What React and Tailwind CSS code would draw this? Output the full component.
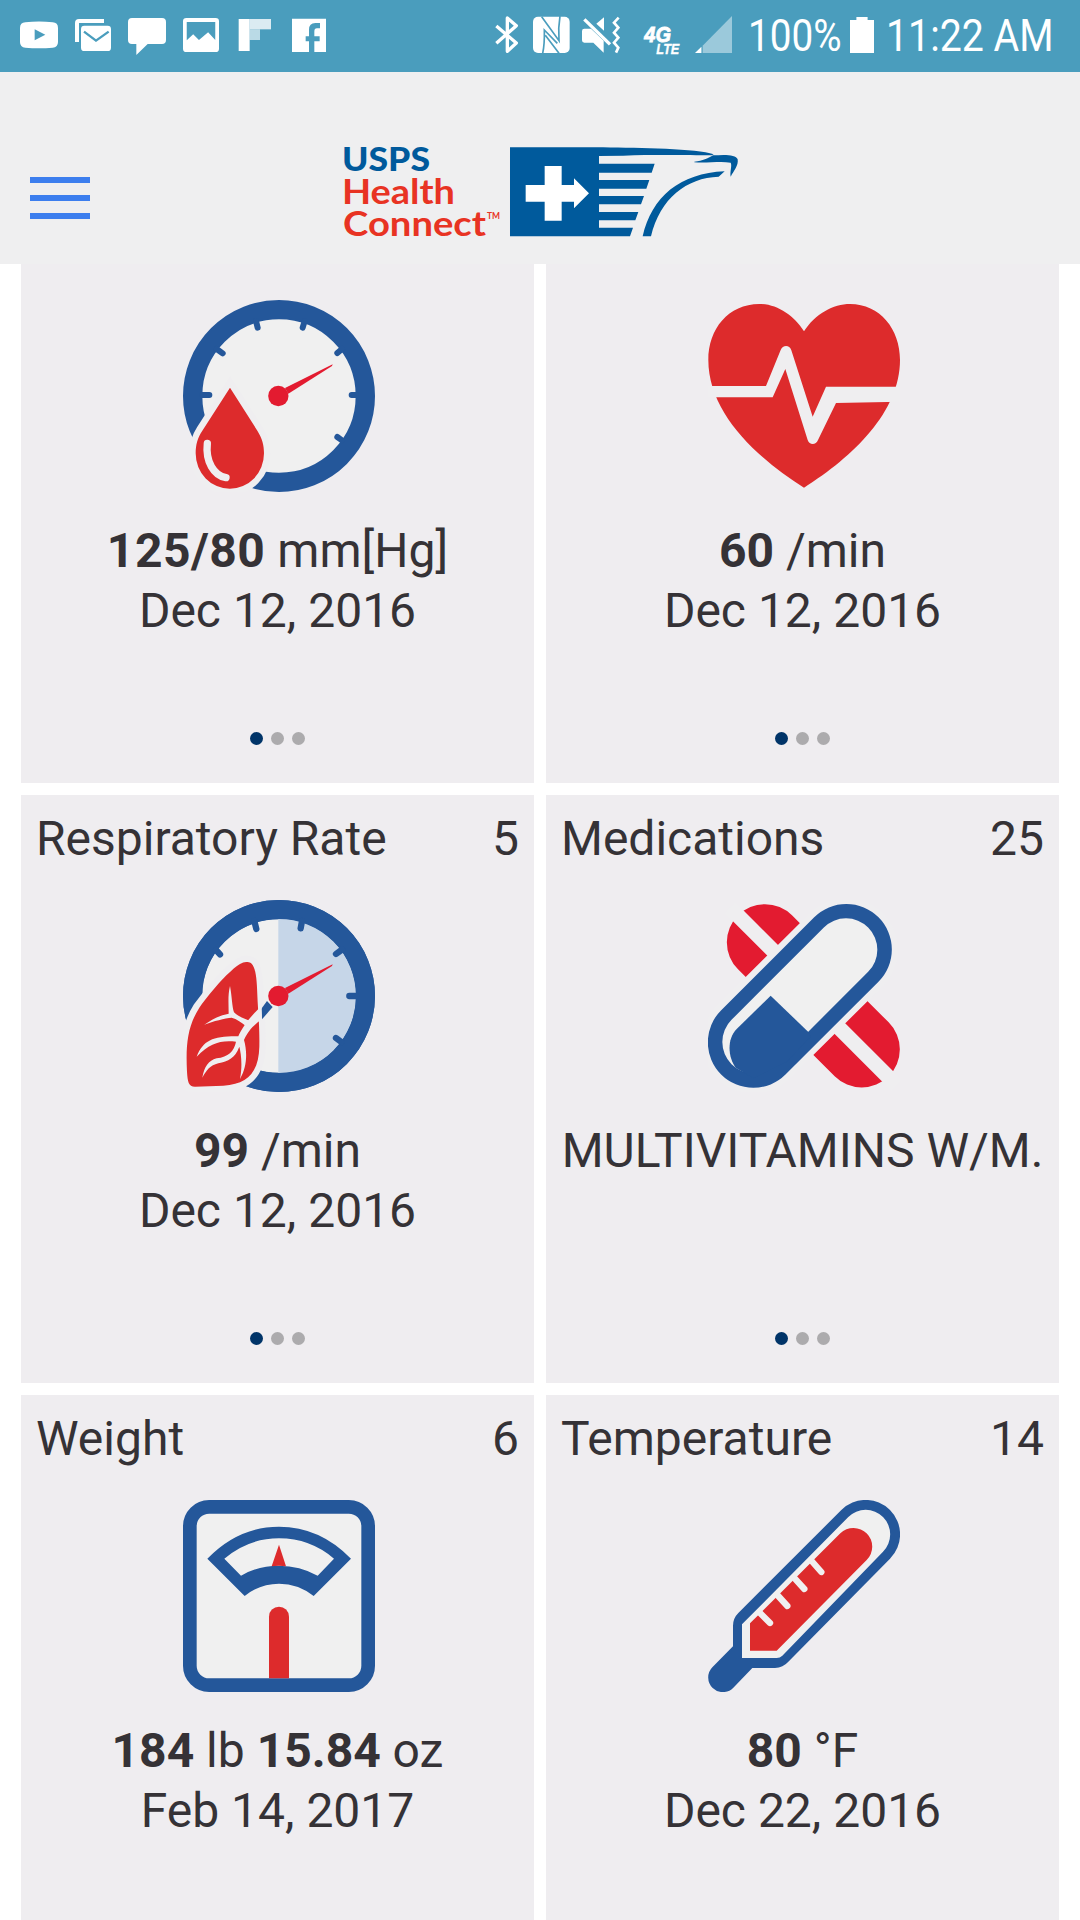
import React from "react";

const BG = "#efeef0";
const BLUE = "#24579a";
const RED = "#dd2b2c";
const CRIMSON = "#e31b30";

function StatusIcon({ box, className, children }) {
  return (
    <svg viewBox={box} preserveAspectRatio="none" className={`h-[72px] shrink-0 ${className}`} fill="#fff">
      {children}
    </svg>
  );
}

function StatusBar() {
  return (
    <div className="flex h-[72px] shrink-0 bg-[#4a9dbd] pl-5 text-white">
      <StatusIcon box="60 0 114 216" className="w-[38px]">
        <path fillRule="evenodd" d="M76 67Q117 62 158 67Q174 68 174 84V126Q174 142 158 143Q117 146 76 143Q60 142 60 126V84Q60 68 76 67ZM104 88V121L136 104Z" />
      </StatusIcon>
      <StatusIcon box="225 0 108 216" className="ml-[17px] w-[36px]">
        <path d="M225 126V69Q225 57 237 57H312V69H237V126Z" />
        <rect x="243" y="77" width="90" height="76" rx="10" />
        <path d="M252 95L288 122L326 95" fill="none" stroke="#4a9dbd" strokeWidth="7" />
      </StatusIcon>
      <StatusIcon box="384 0 114 216" className="ml-[17px] w-[38px]">
        <path d="M396 54H486Q498 54 498 66V120Q498 132 486 132H443L409 165V132H396Q384 132 384 120V66Q384 54 396 54Z" />
      </StatusIcon>
      <StatusIcon box="550 0 106 216" className="ml-[17px] w-[36px]">
        <path fillRule="evenodd" d="M560 54H646Q656 54 656 64V146Q656 156 646 156H560Q550 156 550 146V64Q550 54 560 54ZM561 66V121L580 103L597 120L624 97L645 120V66Z" />
      </StatusIcon>
      <StatusIcon box="714 0 99 216" className="ml-[19px] w-[33px]">
        <path d="M716 57H749V153H716Z" />
        <path d="M749 57H813V88H749Z" opacity=".8" />
        <path d="M749 88H780V120H749Z" opacity=".62" />
      </StatusIcon>
      <StatusIcon box="876 0 102 216" className="ml-[21px] w-[34px]">
        <path fillRule="evenodd" d="M876 56H978V156H943V124H959V109H943V95Q943 85 951 85H960V69H946Q927 69 927 89V109H917V124H927V156H876Z" />
      </StatusIcon>

      <StatusIcon box="30 -24 72 216" className="ml-[169px] w-[24px]">
        <path d="M34 54L94 105L67 130V30L94 53L34 106" fill="none" stroke="#fff" strokeWidth="10" strokeLinejoin="round" />
      </StatusIcon>
      <StatusIcon box="144 -24 111 216" className="ml-[14px] w-[37px]">
        <rect x="144" y="26" width="110" height="109" rx="15" />
        <path d="M173 136Q179 110 178 66L217 106M170 26L222 98Q219 60 225 24M181 82L222 136" fill="none" stroke="#4a9dbd" strokeWidth="5" />
      </StatusIcon>
      <StatusIcon box="291 -24 114 216" className="ml-[12px] w-[38px]">
        <path d="M298 62H318L356 98V134L325 104H298Q291 104 291 97V69Q291 62 298 62ZM334 47L357 28V68Z" />
        <path d="M298 34L375 109" stroke="#fff" strokeWidth="10" />
        <path d="M401 29L387 44L400 59L387 74L400 89L387 104L400 119L393 134" fill="none" stroke="#fff" strokeWidth="8" />
      </StatusIcon>
      <StatusIcon box="478 -24 108 216" className="ml-[24px] w-[36px] overflow-visible">
        <text x="479" y="101" fontFamily="Liberation Sans, sans-serif" fontWeight="700" fontStyle="italic" fontSize="64" textLength="80" lengthAdjust="spacingAndGlyphs" stroke="#fff" strokeWidth="2.500">4G</text>
        <text x="515" y="137" fontFamily="Liberation Sans, sans-serif" fontWeight="700" fontStyle="italic" fontSize="43" textLength="69" lengthAdjust="spacingAndGlyphs" stroke="#fff">LTE</text>
      </StatusIcon>
      <StatusIcon box="598 0 92 216" className="ml-[15px] w-[37px]">
        <path d="M690 48V159H617V137Z" opacity=".45" />
        <path d="M614 140V159H598Z" />
      </StatusIcon>
      <div className="ml-[16px] w-[94px] pt-[8px] font-['Roboto',sans-serif] text-[45px] leading-[56px]">
        <span className="inline-block origin-left scale-x-[0.86]">100%</span>
      </div>
      <StatusIcon box="988 0 60 216" className="ml-[8px] w-[24px]">
        <path d="M988 60H1004V51H1032V60H1048V159H988Z" />
      </StatusIcon>
      <div className="ml-[12px] w-[180px] pt-[8px] font-['Roboto',sans-serif] text-[45px] leading-[56px]">
        <span className="inline-block origin-left scale-x-[0.873] whitespace-nowrap">11:22 AM</span>
      </div>
    </div>
  );
}

function Logo() {
  return (
    <svg viewBox="0 0 400 100" className="h-[100px] w-[400px] overflow-visible" aria-label="USPS Health Connect">
      <g fontFamily="Lato, sans-serif">
        <text x="0" y="31" fill="#005a9c" fontWeight="900" fontSize="32" textLength="88" lengthAdjust="spacingAndGlyphs">USPS</text>
        <text x="0" y="64" fill="#e83323" fontWeight="700" fontSize="33.500" textLength="113" lengthAdjust="spacingAndGlyphs">Health</text>
        <text x="1" y="96" fill="#e83323" fontWeight="700" fontSize="33.500" textLength="143" lengthAdjust="spacingAndGlyphs">Connect</text>
        <text x="145" y="79" fill="#e83323" fontWeight="700" fontSize="9.500" textLength="13" lengthAdjust="spacingAndGlyphs">TM</text>
      </g>
      <g transform="translate(148 -10) scale(.33333)" fill="#005a9c">
        <path d="M60 52H340C450 54 620 56 671 73L665 76C600 76 500 74 400 77L327 78V319H60Z" />
        <path d="M327 101H494L485 128H327ZM327 150H478L469 176H327ZM327 198H462L453 223H327ZM327 246H445L436 271H327ZM327 293H429L420 319H327Z" />
        <path d="M613 95C640 92 652 86 669 76C700 74 738 72 743 88C746 106 732 122 722 140C719 125 727 108 722 98C690 92 655 100 613 97Z" />
        <path d="M458 319C485 200 570 130 704 124L686 140C590 143 510 205 483 319Z" />
        <path fill="#fff" d="M164 108H215V165H252V145L297 190L252 235V215H215V272H164V215H107V165H164Z" />
      </g>
    </svg>
  );
}

function Header() {
  return (
    <header className="relative z-10 flex h-[192px] shrink-0 items-start bg-[#efeff0] pl-[30px] pt-[68px]">
      <button className="mt-[37px] flex w-[60px] flex-col gap-3" aria-label="Menu">
        <span className="h-1.5 w-full bg-[#3c7eee]" />
        <span className="h-1.5 w-full bg-[#3c7eee]" />
        <span className="h-1.5 w-full bg-[#3c7eee]" />
      </button>
      <div className="ml-[252px]">
        <Logo />
      </div>
    </header>
  );
}

function Needle() {
  return (
    <g fill={CRIMSON}>
      <path d="M488 238L486 243L355 326L345 309Z" />
      <circle cx="325" cy="333" r="30.500" />
    </g>
  );
}

function BloodPressureIcon() {
  const drop = "M180 308L262 437C277 461 282 480 282 505A102 106 0 0 1 77 505C77 480 82 460 97 437Z";
  return (
    <>
      <circle cx="327" cy="333" r="259" fill="#f0f0f0" stroke={BLUE} strokeWidth="58" />
      <path d="M97 330H118M558 330H545M258 108L263 128M404 108L398 128M140 192L158 205M516 192L502 204M516 466L502 456" stroke={BLUE} strokeWidth="18" strokeLinecap="round" fill="none" />
      <path d={drop} fill={BG} stroke={BG} strokeWidth="38" />
      <path d={drop} fill={RED} />
      <path d="M112 475C106 530 132 572 168 578" stroke={BG} strokeWidth="22" strokeLinecap="round" fill="none" />
      <Needle />
    </>
  );
}

function HeartIcon() {
  return (
    <>
      <path fill={RED} d="M342 139C375 87 430 57 480 57C570 57 630 132 630 225C630 380 490 515 342 608C194 515 55 380 55 225C55 132 115 57 208 57C262 57 312 92 342 139Z" />
      <path fill={BG} d="M40 303H228L272 195C278 180 298 178 304 196L368 395L408 305H650V350L438 354L384 465C378 481 358 481 353 465L286 252L248 337H40Z" />
    </>
  );
}

function RespiratoryIcon() {
  const lung = "M232 231C252 232 260 255 262 330C264 380 269 420 268 485C266 560 235 598 160 602L75 605C55 604 53 590 51 560C47 480 52 425 88 368C130 310 180 255 210 237C218 232 225 230 232 231Z";
  return (
    <>
      <circle cx="327" cy="333" r="259" fill="#f0f0f0" stroke={BLUE} strokeWidth="58" />
      <path d="M325 100A232 232 0 0 1 325 566Z" fill="#c6d6e8" />
      <circle cx="327" cy="333" r="259.500" fill="none" stroke={BLUE} strokeWidth="57" />
      <path d="M558 333H538M253 108L259 132M396 108L392 130M138 195L150 208M516 194L498 207M514 471L498 459" stroke={BLUE} strokeWidth="19" strokeLinecap="round" fill="none" />
      <path d={lung} fill={BG} stroke={BG} strokeWidth="38" strokeLinejoin="round" />
      <path d="M273 373L291 348L308 366L276 403Z" fill={BLUE} />
      <path d={lung} fill={RED} />
      <path fill={BG} d="M180 303C186 335 186 365 192 382C205 395 225 402 242 408L230 425C215 412 200 402 185 398C165 400 130 408 103 419C130 400 155 390 176 386C176 360 173 330 180 303Z" />
      <path fill={BG} d="M275 362L276 402C252 420 236 435 222 465C232 500 232 545 210 582C218 540 213 505 208 485C195 520 175 528 145 535C120 541 110 555 97 578C103 545 115 527 140 520C175 515 192 500 198 470C150 465 120 475 80 515C100 465 130 453 205 454C212 435 235 400 275 362Z" />
      <Needle />
    </>
  );
}

function MedicationsIcon() {
  return (
    <g strokeLinecap="round">
      <path d="M225 172L340 287M515 493L400 378" stroke={CRIMSON} strokeWidth="229" />
      <path d="M120 68L300 248M620 601L420 401" stroke={BG} strokeWidth="45" strokeLinecap="butt" />
      <path d="M190 471L469 194" stroke={BG} strokeWidth="309" />
      <path d="M190 472L469 193.500" stroke={BLUE} strokeWidth="273" />
      <path d="M191 471L468 194" stroke="#f0f0f0" strokeWidth="188" />
      <path fill={BLUE} d="M242 332L355 441L362 455L290 530L190 580L137 548C116 520 108 465 140 432Z" />
    </g>
  );
}

function WeightIcon() {
  return (
    <>
      <rect x="59.500" y="65.500" width="535" height="535" rx="58" fill="#f0f0f0" stroke={BLUE} strokeWidth="41" />
      <path fill={BLUE} fillRule="evenodd" d="M112 221Q205 125 327 125Q450 125 543 221L431 333Q385 296 327 296Q270 296 224 333ZM163 221Q235 160 327 160Q420 160 492 221L443 272Q390 242 327 242Q265 242 213 272Z" />
      <path fill={RED} d="M327 179L348 244Q327 240 305 244Z" />
      <path fill={RED} d="M297 580V395A30 30 0 0 1 357 395V580Z" />
    </>
  );
}

function TemperatureIcon() {
  return (
    <>
      <path fill={BLUE} d="M454 75L145 384Q129 400 129 422V484L67 547A43 43 0 0 0 130 608L187 549H255Q279 548 295 530L600 221A103 103 0 0 0 454 75Z" />
      <path fill="#f0f0f0" d="M475 96L156 418V519H260Q270 519 277 512L579 200A73.500 73.500 0 0 0 475 96Z" />
      <path fill={RED} d="M451 145L180 415V497H260L530 225A56 56 0 0 0 451 145Z" />
      <path d="M365 228L394 261M314 280L343 312M262 330L292 363M208 382L240 414" stroke="#f0f0f0" strokeWidth="19" strokeLinecap="round" />
    </>
  );
}

const cards = [
  { id: "bp", Icon: BloodPressureIcon, value: <><b className="tracking-[0.5px]">125/80</b> mm[Hg]</>, date: "Dec 12, 2016" },
  { id: "hr", Icon: HeartIcon, right: true, value: <><b>60</b> /min</>, date: "Dec 12, 2016" },
  { id: "rr", title: "Respiratory Rate", count: 5, Icon: RespiratoryIcon, value: <><b>99</b> /min</>, date: "Dec 12, 2016" },
  { id: "med", title: "Medications", count: 25, Icon: MedicationsIcon, right: true, value: "MULTIVITAMINS W/M." },
  { id: "wt", title: "Weight", count: 6, Icon: WeightIcon, value: <><b>184</b> lb <b>15.84</b> oz</>, date: "Feb 14, 2017" },
  { id: "temp", title: "Temperature", count: 14, Icon: TemperatureIcon, right: true, value: <><b>80</b> °F</>, date: "Dec 22, 2016" },
];

function Card({ title, count, Icon, right, value, date }) {
  return (
    <section className="flex h-[588px] flex-col items-center bg-[#efedf0] pt-[14px] text-[48px] leading-[60px] text-[#353236]">
      <div className="flex h-[60px] w-full justify-between px-[15px]">
        <span>{title}</span>
        <span>{count}</span>
      </div>
      <svg viewBox={right ? "54 45 576 576" : "39 45 576 576"} className="ml-[3px] mt-[31px] h-[192px] w-[192px] shrink-0">
        <Icon />
      </svg>
      <div className="mt-[29px] h-[60px] whitespace-nowrap">{value}</div>
      <div className="h-[60px] whitespace-nowrap">{date}</div>
      <div className="mt-[91px] flex gap-2">
        <span className="size-[13px] rounded-full bg-[#003468]" />
        <span className="size-[13px] rounded-full bg-[#acabad]" />
        <span className="size-[13px] rounded-full bg-[#acabad]" />
      </div>
    </section>
  );
}

export default function App() {
  return (
    <div className="flex h-[1920px] w-[1080px] flex-col overflow-hidden bg-white font-['Roboto',sans-serif]">
      <StatusBar />
      <Header />
      <main className="-mt-[69px] grid grid-cols-2 gap-3 px-[21px]">
        {cards.map((card) => (
          <Card key={card.id} {...card} />
        ))}
      </main>
    </div>
  );
}
